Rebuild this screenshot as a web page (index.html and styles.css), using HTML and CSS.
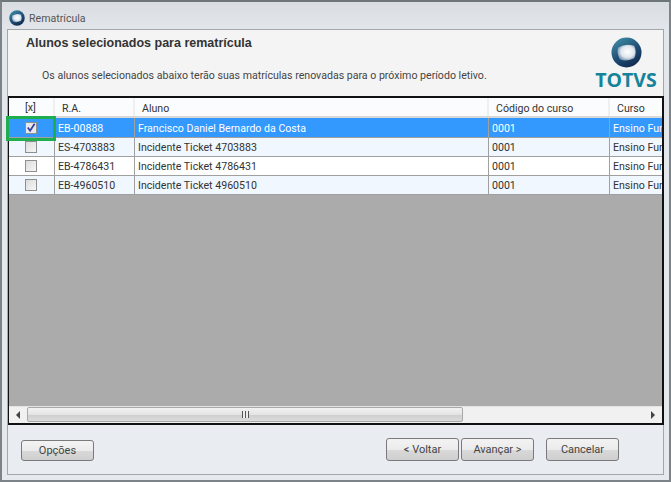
FILE: index.html
```html
<!DOCTYPE html>
<html lang="pt">
<head>
<meta charset="utf-8">
<title>Rematrícula</title>
<link rel="stylesheet" href="styles.css">
</head>
<body>
<div class="window">
  <div class="titlebar">
    <svg class="appicon" width="16" height="16" viewBox="0 0 32 32"><defs><linearGradient id="r" x1="0.2" y1="0" x2="0.8" y2="1"><stop offset="0" stop-color="#3f8ca6"/><stop offset=".55" stop-color="#1d4a72"/><stop offset="1" stop-color="#12264a"/></linearGradient><radialGradient id="s" cx=".55" cy=".45" r=".6"><stop offset="0" stop-color="#fff"/><stop offset=".6" stop-color="#dfe7ee"/><stop offset="1" stop-color="#6d8fab"/></radialGradient></defs><circle cx="16" cy="16" r="15.500" fill="url(#r)"/><path d="M6 11 Q15 6 24 9 Q27 16 24 22 Q15 26 8 23 Q5 17 6 11z" fill="url(#s)"/></svg>
    <span class="title">Rematrícula</span>
  </div>
  <div class="panel">
    <header class="head">
      <div class="headtext">
        <h1>Alunos selecionados para rematrícula</h1>
        <p>Os alunos selecionados abaixo terão suas matrículas renovadas para o próximo período letivo.</p>
      </div>
      <div class="logo">
        <svg width="31" height="31" viewBox="0 0 32 32"><circle cx="16" cy="16" r="15.500" fill="url(#r)"/><path d="M7 11 Q15 6 24 9 Q27 16 24 22 Q15 26 9 23 Q6 17 7 11z" fill="url(#s)"/></svg>
        <span class="brand">TOTVS</span>
      </div>
    </header>
    <div class="grid">
      <div class="rows">
      <div class="row hdr">
        <div class="c c0">[x]</div><div class="c c1">R.A.</div><div class="c c2">Aluno</div><div class="c c3">Código do curso</div><div class="c c4">Curso</div>
      </div>
      <div class="row sel">
        <div class="c c0"><span class="chk"><svg width="11" height="11" viewBox="0 0 11 11"><path d="M2 5.500 4.500 9 9.500 1.500" fill="none" stroke="#35419a" stroke-width="2"/></svg></span></div><div class="c c1">EB-00888</div><div class="c c2">Francisco Daniel Bernardo da Costa</div><div class="c c3">0001</div><div class="c c4">Ensino Fundamental</div>
      </div>
      <div class="row alt">
        <div class="c c0"><span class="chk"></span></div><div class="c c1">ES-4703883</div><div class="c c2">Incidente Ticket 4703883</div><div class="c c3">0001</div><div class="c c4">Ensino Fundamental</div>
      </div>
      <div class="row">
        <div class="c c0"><span class="chk"></span></div><div class="c c1">EB-4786431</div><div class="c c2">Incidente Ticket 4786431</div><div class="c c3">0001</div><div class="c c4">Ensino Fundamental</div>
      </div>
      <div class="row alt">
        <div class="c c0"><span class="chk"></span></div><div class="c c1">EB-4960510</div><div class="c c2">Incidente Ticket 4960510</div><div class="c c3">0001</div><div class="c c4">Ensino Fundamental</div>
      </div>
      </div>
      <div class="scroll">
        <span class="arrow left"></span>
        <div class="track"><div class="thumb"><span class="grip"></span></div></div>
        <span class="arrow right"></span>
      </div>
      <div class="highlight"></div>
    </div>
    <footer class="foot">
      <button class="btn small">Opções</button>
      <div class="spacer"></div>
      <button class="btn">&lt; Voltar</button>
      <button class="btn next">Avançar &gt;</button>
      <button class="btn">Cancelar</button>
    </footer>
  </div>
</div>
</body>
</html>
```
FILE: styles.css
```css
* { box-sizing: border-box; }
html, body { margin: 0; padding: 0; }
body { width: 671px; height: 482px; overflow: hidden; font-family: Roboto, "Liberation Sans", Arial, sans-serif; font-size: 10.600px; color: #333; }
.window { width: 671px; height: 482px; display: flex; flex-direction: column; background: linear-gradient(#d9dde1, #e3e6ea 30px, #e6e9ee); border: 2px solid #7d8489; border-top-color: #6f767b; padding: 0 5px 5px 5px; }
.titlebar { height: 27px; display: flex; align-items: center; gap: 4px; padding: 4px 0 0 2px; flex: none; }
.appicon { flex: none; }
.title { color: #555; font-size: 10.600px; padding-top: 1px; }
.panel { flex: 1; border: 1px solid #a2a7ab; display: flex; flex-direction: column; background: #e9ecf1; min-height: 0; }
.head { height: 66px; flex: none; background: #f4f4f4; display: flex; justify-content: space-between; padding: 6px 6px 0 18px; }
.head h1 { margin: 0; font-family: "Liberation Sans", Arial, sans-serif; font-size: 12.500px; font-weight: 700; color: #333; line-height: 14px; }
.head p { margin: 19px 0 0 16px; font-size: 10.600px; color: #444; line-height: 14px; }
.logo { display: flex; flex-direction: column; align-items: center; width: 62px; padding-top: 1px; }
.logo svg { display: block; }
.brand { font-family: "Open Sans", sans-serif; font-size: 19.500px; font-weight: 700; color: #15839a; line-height: 18px; margin-top: 3px; }
.grid { position: relative; flex: none; height: 329px; width: 656px; border: 2px solid #111; border-left-width: 1px; display: flex; flex-direction: column; background: #ababab; }
.rows { flex: 1; overflow: hidden; }
.row { display: flex; height: 19px; background: #fff; border-bottom: 1px solid #a0a0a0; color: #333; }
.row.alt { background: #f0f7fe; }
.row.sel { background: #3399ff; color: #fff; height: 20px; }
.row.hdr { background: #fbfcfd; height: 20px; border-bottom: 2px solid #d8d8d8; color: #333; }
.c { flex: none; display: flex; align-items: center; padding: 1px 0 0 3px; border-right: 1px solid #a0a0a0; white-space: nowrap; overflow: hidden; }
.hdr .c { border-right: 2px solid #efefef; padding: 2px 0 0 7px; }
.c0 { width: 46px; justify-content: flex-start; padding: 0 0 0 16px !important; }
.c1 { width: 80px; }
.c2 { width: 354px; }
.c3 { width: 121px; }
.c4 { width: 60px; border-right: 0; }
.hdr .c4 { border-right: 0; }
.chk { width: 12px; height: 12px; border: 1px solid #8e8f8f; background: linear-gradient(135deg, #dcdcdc, #f6f6f6); display: flex; align-items: center; justify-content: center; }
.sel .chk { background: #e8e8ee; }
.scroll { flex: none; height: 17px; background: #f1f1f1; display: flex; align-items: center; border-top: 1px solid #e4e4e4; }
.arrow { width: 18px; flex: none; display: flex; justify-content: center; }
.arrow::before { content: ""; border: 4px solid transparent; }
.arrow.left::before { border-right-color: #444; border-left-width: 0; }
.arrow.right::before { border-left-color: #444; border-right-width: 0; }
.track { flex: 1; height: 16px; }
.thumb { width: 436px; height: 15px; border: 1px solid #a9a9a9; border-radius: 2px; background: linear-gradient(#f2f2f2, #e4e4e4 50%, #cfcfcf 55%, #dcdcdc); display: flex; align-items: center; justify-content: center; }
.grip { width: 7px; height: 7px; background: repeating-linear-gradient(90deg, #555 0 1px, #eee 1px 3px); }
.highlight { position: absolute; left: -3px; top: 18px; width: 50px; height: 25px; border: 3px solid #1fad4f; pointer-events: none; }
.foot { flex: 1; display: flex; align-items: flex-end; padding: 13px 44px 13px 13px; gap: 2px; }
.spacer { flex: 1; }
.btn { font-family: inherit; font-size: 11px; color: #444; width: 73px; height: 23px; padding: 0; border: 1px solid #7a7a7a; border-radius: 3px; background: linear-gradient(#f3f3f3, #ebebeb 50%, #d8d8d8 55%, #cfcfcf); }
.btn.small { height: 21px; }
.btn.next { margin-right: 10px; }
```
